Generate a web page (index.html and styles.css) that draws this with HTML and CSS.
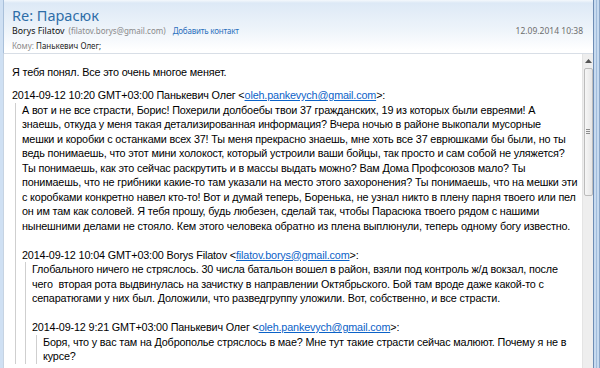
FILE: index.html
```html
<!DOCTYPE html>
<html lang="ru">
<head>
  <meta charset="UTF-8" />
  <title>Re: Парасюк</title>
  <link rel="stylesheet" href="styles.css">
</head>
<body>

<div class="window">
  <div class="main">
    <header class="head">
      <h1 class="subject">Re: Парасюк</h1>
      <div class="from-row">
        <span class="sender">Borys Filatov</span>
        <span class="sender-mail">(filatov.borys@gmail.com)</span>
        <a class="add-contact" href="#">Добавить контакт</a>
        <span class="date">12.09.2014 10:38</span>
      </div>
      <div class="to-row"><span class="to-label">Кому:</span> Панькевич Олег;</div>
    </header>

    <div class="body-wrap">
      <div class="message">
        <p class="reply">Я тебя понял. Все это очень многое меняет.</p>

        <div class="quote-head">2014-09-12 10:20 GMT+03:00 Панькевич Олег &lt;<a href="#">oleh.pankevych@gmail.com</a>&gt;:</div>
        <blockquote>
          <p>А вот и не все страсти, Борис! Похерили долбоебы твои 37 гражданских, 19 из которых были евреями! А<br>
          знаешь, откуда у меня такая детализированная информация? Вчера ночью в районе выкопали мусорные<br>
          мешки и коробки с останками всех 37! Ты меня прекрасно знаешь, мне хоть все 37 еврюшками бы были, но ты<br>
          ведь понимаешь, что этот мини холокост, который устроили ваши бойцы, так просто и сам собой не уляжется?<br>
          Ты понимаешь, как это сейчас раскрутить и в массы выдать можно? Вам Дома Профсоюзов мало? Ты<br>
          понимаешь, что не грибники какие-то там указали на место этого захоронения? Ты понимаешь, что на мешки эти<br>
          с коробками конкретно навел кто-то! Вот и думай теперь, Боренька, не узнал никто в плену парня твоего или пел<br>
          он им там как соловей. Я тебя прошу, будь любезен, сделай так, чтобы Парасюка твоего рядом с нашими<br>
          нынешними делами не стояло. Кем этого человека обратно из плена выплюнули, теперь одному богу известно.</p>
          <p class="blank">&nbsp;</p>

          <div class="quote-head">2014-09-12 10:04 GMT+03:00 Borys Filatov &lt;<a href="#">filatov.borys@gmail.com</a>&gt;:</div>
          <blockquote>
            <p>Глобального ничего не стряслось. 30 числа батальон вошел в район, взяли под контроль ж/д вокзал, после<br>
            чего &nbsp;вторая рота выдвинулась на зачистку в направлении Октябрьского. Бой там вроде даже какой-то с<br>
            сепаратюгами у них был. Доложили, что разведгруппу уложили. Вот, собственно, и все страсти.</p>
            <p class="blank">&nbsp;</p>

            <div class="quote-head">2014-09-12 9:21 GMT+03:00 Панькевич Олег &lt;<a href="#">oleh.pankevych@gmail.com</a>&gt;:</div>
            <blockquote>
              <p>Боря, что у вас там на Доброполье стряслось в мае? Мне тут такие страсти сейчас малюют. Почему я не в<br>
              курсе?</p>
            </blockquote>
          </blockquote>
        </blockquote>
      </div>

      <div class="scrollbar">
        <div class="arrow-up">
          <svg width="7" height="4" viewBox="0 0 7 4"><path d="M0 4 L3.5 0 L7 4 Z" fill="#555"/></svg>
        </div>
        <div class="thumb"><span class="grip"></span></div>
      </div>
    </div>
  </div>
  <div class="frame-right"></div>
</div>

</body>
</html>
```

FILE: styles.css
```css
html, body {
  margin: 0;
  padding: 0;
  height: 100%;
  overflow: hidden;
}

body {
  font-family: "Liberation Sans", Arial, sans-serif;
  background: #fff;
}

.window {
  display: flex;
  height: 368px;
  width: 600px;
}

.main {
  flex: 1;
  display: flex;
  flex-direction: column;
  border-left: 3px solid #cfe0f3;
  min-width: 0;
}

/* Kopfbereich */
.head {
  background: linear-gradient(to bottom, #f4f8fc 0px, #dde9f6 3px, #eef4fa 30px, #ffffff 50px);
  border-left: 1px solid #a9c0da;
  border-bottom: 1px solid #d8dee6;
  height: 54px;
  box-sizing: border-box;
  padding: 7px 0 0 8px;
  font-family: "Noto Sans", "Open Sans", sans-serif;
}

.subject {
  margin: 0;
  font-size: 14.5px;
  font-weight: normal;
  color: #2f6ea8;
  line-height: 17px;
}

.from-row {
  display: flex;
  align-items: baseline;
  font-size: 8px;
  line-height: 12px;
  margin-top: 1px;
  padding-right: 10px;
}

.sender {
  color: #111;
  font-size: 8.8px;
}

.sender-mail {
  color: #8a8a8a;
  margin-left: 4px;
}

.add-contact {
  color: #2c70bd;
  text-decoration: none;
  margin-left: 7px;
  letter-spacing: -0.2px;
}

.date {
  margin-left: auto;
  color: #6e6e6e;
  font-size: 8.5px;
}

.to-row {
  font-size: 8px;
  line-height: 12px;
  margin-top: 3px;
  color: #1e1e1e;
}

.to-label {
  color: #8a8a8a;
}

/* Nachrichtentext */
.body-wrap {
  flex: 1;
  display: flex;
  min-height: 0;
}

.message {
  flex: 1;
  border-left: 1px solid #c6d3e2;
  padding: 11px 0 0 8px;
  font-size: 10.8px;
  letter-spacing: -0.15px;
  line-height: 14.5px;
  color: #000;
  white-space: nowrap;
  overflow: hidden;
}

.message p {
  margin: 0;
}

.reply {
  margin-bottom: 8.5px !important;
}

.message a {
  color: #0b62c8;
  text-decoration: underline;
}

blockquote {
  margin: 0 0 0 3px;
  border-left: 1px solid #cfcfcf;
  padding-left: 6px;
}

blockquote blockquote {
  margin-left: 3px;
}

blockquote blockquote blockquote {
  margin-left: 4px;
}

/* Bildlaufleiste */
.scrollbar {
  width: 10px;
  background: #eeeeee;
  border-left: 1px solid #e4e4e4;
  display: flex;
  flex-direction: column;
  align-items: center;
  padding-top: 2px;
}

.arrow-up {
  height: 10px;
  display: flex;
  align-items: center;
  justify-content: center;
}

.thumb {
  margin-top: 2px;
  width: 9px;
  height: 128px;
  box-sizing: border-box;
  border: 1px solid #bcbcbc;
  border-radius: 2px;
  background: linear-gradient(to right, #f6f6f6, #e6e6e6);
  display: flex;
  align-items: center;
  justify-content: center;
}

.grip {
  width: 4px;
  height: 6px;
  background: repeating-linear-gradient(to bottom, #8c8c8c 0 1px, transparent 1px 2px);
}

.frame-right {
  width: 7px;
  background: linear-gradient(to right, #6e8db5 0 1px, #c7daef 1px 3px, #a2bddc 3px 4px, #c7daef 4px 6px, #8ba7c9 6px);
}
```
